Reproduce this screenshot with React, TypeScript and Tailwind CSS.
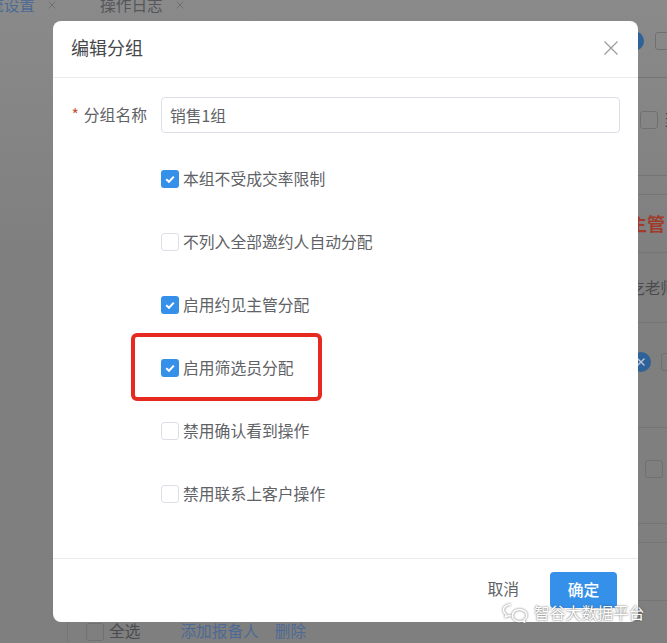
import { X } from 'lucide-react';

const options = [
  { label: '本组不受成交率限制', checked: true },
  { label: '不列入全部邀约人自动分配', checked: false },
  { label: '启用约见主管分配', checked: true },
  { label: '启用筛选员分配', checked: true, marked: true },
  { label: '禁用确认看到操作', checked: false },
  { label: '禁用联系上客户操作', checked: false },
];

function Box({ checked }: { checked?: boolean }) {
  if (checked) {
    return (
      <span className="flex h-[18px] w-[18px] shrink-0 items-center justify-center rounded-[3px] bg-[#3590ea]">
        <svg width="12" height="12" viewBox="0 0 12 12" fill="none">
          <path d="M2.2 6.2 L5 8.8 L9.8 3.6" stroke="#fff" strokeWidth="2" />
        </svg>
      </span>
    );
  }
  return <span className="h-[18px] w-[18px] shrink-0 rounded-[3px] border border-[#dcdfe6] bg-white" />;
}

function DimBox() {
  return <span className="block h-[18px] w-[18px] shrink-0 rounded-[3px] border border-[#6f7072]" />;
}

function BackgroundPage() {
  return (
    <div className="flex h-full flex-col text-[15.7px] text-[#4a4b4e]">
      <div className="flex h-[21px] items-end gap-[42px] overflow-hidden pb-[8px] leading-[16px]">
        <span className="-ml-[12px] flex items-center gap-[11px] text-[#4d6a94]">
          <span>统设置</span>
          <X size={12} strokeWidth={1} className="text-[#55565a]" />
        </span>
        <span className="flex items-center gap-[11px] text-[#55565a]">
          <span>操作日志</span>
          <X size={12} strokeWidth={1} />
        </span>
      </div>

      {/* rows peeking out on the right of the dialog */}
      <div className="ml-[638px] flex flex-1 flex-col">
        <div className="flex h-[57px] items-center border-b border-[#757575] pb-[17px]">
          <span className="-ml-[14px] mr-[11px] h-[20px] w-[20px] shrink-0 rounded-full bg-[#2f6298]" />
          <DimBox />
        </div>
        <div className="flex h-[98px] items-center border-b border-[#757575] pb-[14px] pl-[2px]">
          <DimBox />
          <span className="ml-[6px] text-[#3d3d3f]">当</span>
        </div>
        <div className="h-[19px] border-b border-[#757575]" />
        <div className="flex h-[58px] items-center overflow-hidden whitespace-nowrap border-b border-[#757575] text-[18px] font-bold text-[#a03a2a]">
          <span className="-ml-[9px]">主管</span>
        </div>
        <div className="flex h-[70px] items-center overflow-hidden whitespace-nowrap border-b border-[#757575]">
          <span className="-ml-[9px]">吃老师</span>
        </div>
        <div className="flex h-[105px] items-center border-b border-[#757575] pb-[26px]">
          <span className="-ml-[7px] mr-[10px] flex h-[20px] w-[20px] shrink-0 items-center justify-center rounded-full bg-[#2f6298]">
            <X size={12} strokeWidth={3} className="text-[#b7c4d4]" />
          </span>
          <DimBox />
        </div>
        <div className="flex h-[96px] items-center border-b border-[#757575] pb-[14px] pl-[7px]">
          <DimBox />
        </div>
        <div className="h-[19px] border-b border-[#757575]" />
        <div className="h-[58px] border-b border-[#757575]" />
      </div>

      <div className="ml-[67px] flex h-[21px] items-center border-l border-[#757575] pb-[1px] pl-[18px] text-[#4d6a94]">
        <DimBox />
        <span className="ml-[5px] -mt-[2px] text-[#4a4b4e]">全选</span>
        <span className="ml-[40px] -mt-[2px]">添加报备人</span>
        <span className="ml-[16px] -mt-[2px]">删除</span>
      </div>
    </div>
  );
}

function WechatMark() {
  return (
    <svg width="26" height="20" viewBox="0 0 26 20" fill="none" stroke="#fff" strokeWidth="1.5" className="drop-shadow-[0_0_1px_#666]">
      <path d="M9 1.5 C4.5 1.5 1.5 4 1.5 7 C1.5 9 2.5 10.5 4 11.5 L3.5 14 L6.5 12.6 C7.5 12.9 8.5 13 9.5 13" />
      <path d="M17.5 6.5 C13.5 6.5 10.5 9 10.5 12.5 C10.5 16 13.5 18.5 17.5 18.5 C18.5 18.5 19.3 18.4 20 18.1 L22.5 19 L22 17 C23.7 15.8 24.7 14.3 24.7 12.5 C24.7 9 21.5 6.5 17.5 6.5 Z" />
    </svg>
  );
}

export default function App() {
  return (
    <div
      className="relative h-[643px] w-[667px] overflow-hidden bg-linear-to-b from-[#8a8a8a] to-[#7f7f7f] to-40%"
      style={{ fontFamily: '"Noto Sans CJK SC", "Liberation Sans", sans-serif' }}
    >
      <BackgroundPage />

      {/* dialog */}
      <div className="absolute left-[53px] top-[21px] flex h-[601px] w-[585px] flex-col rounded-[8px] bg-white text-[#606266]">
        <div className="flex h-[57px] shrink-0 items-center justify-between border-b border-[#e8eaee] pb-[3px] pl-[18px] pr-[20px]">
          <span className="text-[18px] text-[#45474b]">编辑分组</span>
          <svg width="14" height="14" viewBox="0 0 14 14" fill="none" stroke="#9a9a9a" strokeWidth="1.2">
            <path d="M0.5 0.5 L13.5 13.5 M13.5 0.5 L0.5 13.5" />
          </svg>
        </div>

        <div className="flex-1 pr-[18px] pt-[19px]">
          <div className="flex items-center">
            <label className="flex w-[108px] justify-end pr-[14px] text-[15.8px] whitespace-nowrap">
              <span className="mr-[5px] text-[#c2552f]">*</span>
              分组名称
            </label>
            <div className="flex h-[36px] flex-1 items-center rounded-[4px] border border-[#dcdfe6] px-[8px] pt-[1px] text-[15.8px]">
              销售1组
            </div>
          </div>

          <div className="ml-[108px] mt-[14px] flex flex-col">
            {options.map((o) => (
              <div key={o.label} className="relative flex h-[63px] items-center gap-[4px] text-[15.8px]">
                <Box checked={o.checked} />
                <span>{o.label}</span>
                {o.marked && (
                  <span className="absolute -left-[30px] top-[-3px] h-[68px] w-[191px] rounded-[6px] border-4 border-[#e62a20]" />
                )}
              </div>
            ))}
          </div>
        </div>

        <div className="flex h-[64px] shrink-0 items-start justify-end border-t border-[#e8eaee] pr-[21px] pt-[13px]">
          <span className="mr-[31px] mt-[5px] text-[15.8px]">取消</span>
          <span className="flex h-[36px] w-[67px] items-center justify-center rounded-[4px] bg-[#3590ea] text-[15.8px] font-medium text-white">
            确定
          </span>
        </div>
      </div>

      {/* watermark */}
      <div className="absolute left-[502px] top-[601px] flex items-center gap-[6px] whitespace-nowrap text-[15.8px] text-white [text-shadow:0_0_2px_#444]">
        <WechatMark />
        <span>智谷大数据平台</span>
      </div>
    </div>
  );
}
